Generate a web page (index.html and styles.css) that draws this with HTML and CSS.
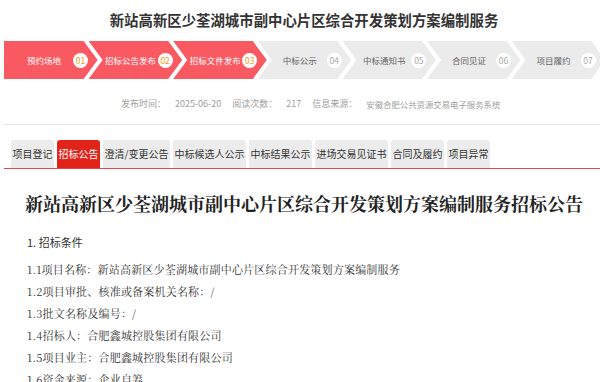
FILE: index.html
```html
<!DOCTYPE html>
<html lang="zh-CN">
<head>
<meta charset="utf-8">
<title>招标公告</title>
<link rel="stylesheet" href="styles.css">
</head>
<body>
<div class="page">
  <h1 class="page-title">新站高新区少荃湖城市副中心片区综合开发策划方案编制服务</h1>

  <div class="steps">
    <div class="step done first"><span class="step-name">预约场地</span><span class="step-num">01</span></div>
    <div class="step done"><span class="step-name">招标公告发布</span><span class="step-num">02</span></div>
    <div class="step done"><span class="step-name">招标文件发布</span><span class="step-num">03</span></div>
    <div class="step"><span class="step-name">中标公示</span><span class="step-num">04</span></div>
    <div class="step"><span class="step-name">中标通知书</span><span class="step-num">05</span></div>
    <div class="step"><span class="step-name">合同见证</span><span class="step-num">06</span></div>
    <div class="step"><span class="step-name">项目履约</span><span class="step-num">07</span></div>
  </div>

  <div class="meta">
    <span class="meta-label">发布时间：</span><span class="meta-value">2025-06-20</span>
    <span class="meta-label">阅读次数：</span><span class="meta-value">217</span>
    <span class="meta-label">信息来源：</span><span class="meta-value source">安徽合肥公共资源交易电子服务系统</span>
  </div>

  <div class="tabs">
    <span class="tab">项目登记</span>
    <span class="tab active">招标公告</span>
    <span class="tab">澄清/变更公告</span>
    <span class="tab">中标候选人公示</span>
    <span class="tab">中标结果公示</span>
    <span class="tab">进场交易见证书</span>
    <span class="tab">合同及履约</span>
    <span class="tab">项目异常</span>
  </div>

  <div class="article">
    <h2 class="article-title">新站高新区少荃湖城市副中心片区综合开发策划方案编制服务招标公告</h2>
    <p class="section-head">1. 招标条件</p>
    <p class="line">1.1项目名称：新站高新区少荃湖城市副中心片区综合开发策划方案编制服务</p>
    <p class="line">1.2项目审批、核准或备案机关名称：/</p>
    <p class="line">1.3批文名称及编号：/</p>
    <p class="line">1.4招标人：合肥鑫城控股集团有限公司</p>
    <p class="line">1.5项目业主：合肥鑫城控股集团有限公司</p>
    <p class="line">1.6资金来源：企业自筹</p>
  </div>
</div>
</body>
</html>
```

FILE: styles.css
```css
html, body {
  margin: 0;
  padding: 0;
  overflow: hidden;
  background: #fff;
}

body {
  font-family: "Noto Sans CJK SC", "Liberation Sans", sans-serif;
  color: #333;
}

.page {
  width: 600px;
  margin-left: 4px;
}

.page-title {
  margin: 0;
  padding-top: 10px;
  font-size: 14.4px;
  line-height: 20px;
  font-weight: 700;
  text-align: center;
  color: #333;
}

.steps {
  display: flex;
  height: 38px;
  margin-top: 11px;
}

.step {
  flex: none;
  width: 93.6px;
  margin-left: -9px;
  display: flex;
  align-items: center;
  background: #ebebeb;
  color: #666;
  clip-path: polygon(0 0, calc(100% - 14px) 0, 100% 50%, calc(100% - 14px) 100%, 0 100%, 14px 50%);
}

.step.first {
  margin-left: 0;
  clip-path: polygon(0 0, calc(100% - 14px) 0, 100% 50%, calc(100% - 14px) 100%, 0 100%);
}

.step.done {
  background: #f95a62;
  color: #fff;
}

.step-name {
  width: 54px;
  margin-left: 15px;
  text-align: center;
  font-size: 8.5px;
  white-space: nowrap;
}

.step.first .step-name {
  margin-left: 13px;
  margin-right: 2px;
}

.step-num {
  width: 15px;
  height: 15px;
  border-radius: 50%;
  background: #fff;
  color: #aaa;
  font-size: 8.5px;
  line-height: 15px;
  text-align: center;
}

.step.done .step-num {
  color: #f09a1e;
}

.meta {
  display: flex;
  margin-top: 18px;
  padding-left: 117px;
  padding-bottom: 13px;
  border-bottom: 1px solid #e6e6e6;
  font-size: 9px;
  line-height: 14px;
  color: #a0a0a0;
  white-space: nowrap;
}

.meta-label {
  margin-right: 9px;
}

.meta-value {
  margin-right: 11px;
}

.meta-value.source {
  font-size: 8.4px;
}

.tabs {
  display: flex;
  gap: 3px;
  margin-top: 15px;
  padding-left: 7px;
  border-bottom: 1px solid #e5484d;
}

.tab {
  height: 28px;
  line-height: 28px;
  padding: 0 1.5px;
  font-size: 10px;
  background: #ececec;
  border-radius: 3px 3px 0 0;
  color: #333;
  white-space: nowrap;
}

.tab.active {
  background: #e2231a;
  color: #fff;
}

.article {
  padding-left: 23px;
}

.article-title {
  margin: 22px 0 0 -23px;
  font-family: "Noto Serif CJK SC", "Noto Sans CJK SC", serif;
  font-size: 18px;
  line-height: 24px;
  font-weight: 700;
  text-align: center;
  color: #222;
}

.section-head {
  margin: 16px 0 5px;
  font-size: 11px;
  line-height: 22px;
  color: #333;
}

.line {
  margin: 0;
  font-family: "Noto Serif CJK SC", "Noto Sans CJK SC", serif;
  font-size: 11px;
  line-height: 22px;
  letter-spacing: 0.2px;
  color: #333;
  white-space: nowrap;
}
```
